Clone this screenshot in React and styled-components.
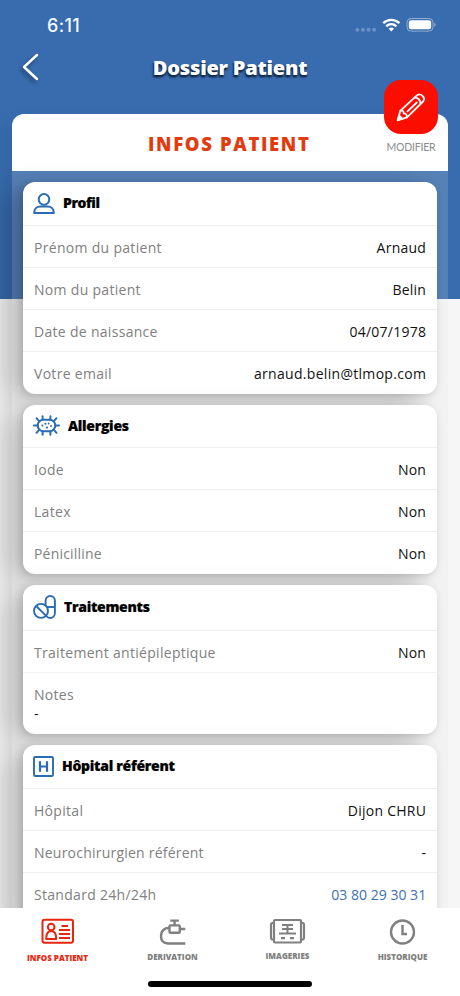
import React from 'react'
import styled, { createGlobalStyle } from 'styled-components'

const GlobalStyle = createGlobalStyle`
  * {
    box-sizing: border-box;
  }
  body {
    margin: 0;
    font-family: 'Open Sans', 'Noto Sans', sans-serif;
  }
`
const Screen = styled.div`
  display: flex;
  flex-direction: column;
  width: 460px;
  height: 996px;
  overflow: hidden;
  background: linear-gradient(#386cae 299px, #f6f6f6 299px);
`
const StatusBar = styled.div`
  display: flex;
  flex: none;
  height: 50px;
  padding: 0 24px 0 47px;
  justify-content: space-between;
  align-items: center;
`
const Time = styled.span`
  padding-top: 2px;
  font-family: 'Inter', sans-serif;
  font-size: 18px;
  font-weight: 500;
  line-height: 50px;
  color: #f4f8ff;
  letter-spacing: 0.3px;
`
const StatusIcons = styled.svg`
  display: block;
`
const NavBar = styled.header`
  display: grid;
  flex: none;
  grid-template-columns: 50px 1fr 50px;
  height: 64px;
`
const BackButton = styled.button`
  height: 36px;
  padding: 0 0 2px 21px;
  border: 0;
  background: none;
  svg {
    display: block;
    filter: drop-shadow(-2px 3px 2px rgba(0, 0, 0, 0.4));
  }
`
const Title = styled.h1`
  margin: 0;
  font-size: 20px;
  font-weight: 800;
  line-height: 36px;
  text-align: center;
  color: white;
  letter-spacing: -0.2px;
  text-shadow: 0 2px 2px #142a48, -1px 2px 2px rgba(10, 25, 50, 0.8);
`
const Panel = styled.main`
  position: relative;
  flex: 1;
  min-height: 0;
  margin: 0 12px;
`
const PanelBody = styled.div`
  height: 100%;
  border-radius: 12px 12px 0 0;
  background: rgba(225, 225, 225, 0.18);
  box-shadow: -14px 10px 20px rgba(0, 0, 0, 0.05);
`
const PanelHeader = styled.div`
  height: 57px;
  padding-left: 136px;
  border-radius: 12px 12px 0 0;
  background: white;
`
const PanelTitle = styled.h2`
  margin: 0;
  font-size: 18.5px;
  font-weight: 800;
  line-height: 60px;
  white-space: nowrap;
  color: #e23b0e;
  letter-spacing: 1.65px;
`
const Edit = styled.div`
  position: absolute;
  top: -34px;
  right: 10px;
  width: 54px;
`
const EditButton = styled.button`
  display: block;
  width: 54px;
  height: 54px;
  padding: 12px;
  border: 0;
  border-radius: 17px;
  background: #fb0d00;
`
const EditLabel = styled.div`
  display: flex;
  justify-content: center;
  font-family: 'Lato', sans-serif;
  font-size: 10.5px;
  line-height: 26px;
  color: #8b8b8b;
  white-space: nowrap;
  letter-spacing: -0.2px;
`
const Cards = styled.div`
  display: flex;
  flex-direction: column;
  gap: 11px;
  padding: 11px 11px 0;
`
const CardBox = styled.section`
  height: ${p => p.height}px;
  flex: none;
  border-radius: 12px;
  background: white;
  box-shadow: -18px 6px 26px rgba(0, 0, 0, 0.2), -2px 2px 8px rgba(0, 0, 0, 0.15);
`
const CardHeader = styled.div`
  display: flex;
  align-items: center;
  gap: 8px;
  height: ${p => p.height}px;
  padding-left: 10px;
  svg {
    display: block;
    flex: none;
  }
`
const CardTitle = styled.h3`
  margin: 0;
  font-size: 14px;
  font-weight: 800;
  line-height: 22px;
  color: #000;
  -webkit-text-stroke: 0.2px #000;
  letter-spacing: ${p => p.spacing};
`
const Row = styled.div`
  display: flex;
  justify-content: space-between;
  height: 42.2px;
  padding: 0 11px;
  border-top: 1px solid #eeeeee;
  line-height: 44px;
`
const Label = styled.span`
  font-size: 14px;
  color: #808080;
  white-space: nowrap;
  letter-spacing: ${p => p.spacing || '0.3px'};
`
const Value = styled.span`
  margin-right: -0.2px;
  font-size: 14px;
  color: ${p => (p.link ? '#3a70b4' : '#111')};
  white-space: nowrap;
  letter-spacing: ${p => p.spacing || '0.25px'};
`
const Notes = styled.div`
  height: 61px;
  padding: 12px 11px;
  border-top: 1px solid #f2f2f2;
  line-height: 19px;
  ${Label}, ${Value} {
    display: block;
  }
`
const TabBar = styled.nav`
  position: relative;
  flex: none;
  height: 88px;
  background: white;
`
const Tabs = styled.div`
  display: grid;
  grid-template-columns: repeat(4, 1fr);
  height: 73px;
`
const Tab = styled.div`
  display: flex;
  flex-direction: column;
  align-items: center;
  padding-top: 10px;
  color: ${p => (p.active ? '#e8250f' : '#808080')};
  svg {
    display: block;
  }
`
const TabLabel = styled.span`
  margin-top: ${p => p.top}px;
  font-size: 8px;
  font-weight: 800;
  line-height: 12px;
  white-space: nowrap;
`
const HomeIndicator = styled.div`
  width: 164px;
  height: 6px;
  margin: 0 auto;
  border-radius: 3px;
  background: black;
`

const BLUE = '#2a6cb2'

const ProfileIcon = () => (
  <svg width="22" height="22" viewBox="0 0 22 22" fill="none" stroke={BLUE} strokeWidth="2">
    <circle cx="11" cy="7.4" r="5.3" />
    <path d="M1.2 20.9c0-4 2.6-6.3 6.2-6.3h7.2c3.6 0 6.2 2.3 6.2 6.3z" strokeLinejoin="round" />
  </svg>
)

const GermIcon = () => (
  <svg width="27" height="21" viewBox="0 0 27 21" fill="none" stroke={BLUE} strokeWidth="2" strokeLinecap="round">
    <rect x="4.7" y="4.7" width="17.6" height="11.6" rx="5.8" />
    <path d="M9.6 4.5V1.2M17.4 4.5V1.2M9.6 16.5v3.3M17.4 16.5v3.3M4.5 10.5H1M22.5 10.5H26M6.3 6.3L3.5 3.2M20.7 6.3L23.5 3.2M6.3 14.7L3.5 17.8M20.7 14.7l2.8 3.1" />
    <g fill={BLUE} stroke="none">
      <circle cx="9.3" cy="10.5" r="1" />
      <circle cx="12.5" cy="8.7" r="1" />
      <circle cx="14" cy="12.5" r="1.1" />
      <circle cx="15.7" cy="8.5" r=".9" />
      <circle cx="18" cy="11" r="1" />
    </g>
  </svg>
)

const PillsIcon = () => (
  <svg width="23" height="24" viewBox="0 0 23 24" fill="none" stroke={BLUE} strokeWidth="1.9">
    <rect x="12.6" y="1" width="9.3" height="22" rx="4.65" />
    <path d="M12.6 12h9.3" />
    <circle cx="8" cy="15.9" r="7" fill="white" />
    <path d="M3.2 11l9.9 9.9" />
  </svg>
)

const HospitalIcon = () => (
  <svg width="21" height="21" viewBox="0 0 21 21" fill="none" stroke={BLUE}>
    <rect x="1" y="1" width="19" height="19" rx="1.3" strokeWidth="1.9" />
    <path d="M7 5.3v10.5M14 5.3v10.5M7 10.5h7" strokeWidth="2.2" />
  </svg>
)

const PencilIcon = () => (
  <svg width="30" height="30" viewBox="0 0 30 30" fill="none" stroke="white" strokeWidth="1.8" strokeLinejoin="round" strokeLinecap="round">
    <path d="M1.6 28.3L4.3 18.9 20.3 3.8c4.1-3.9 10.3 2 6.3 6.2L11 25.4z" />
    <path d="M4.3 18.9c2.6-.8 3.6.6 3.3 2.5 2-.3 3.4 1.2 3.4 4" />
    <path d="M18.3 5.7c3.6-.2 6.2 2.3 6.2 6M11.5 19.3l9.3-8.8" />
    <path d="M1.9 28l1.4-4.3 2.9 2.9z" fill="white" />
  </svg>
)

const IdIcon = () => (
  <svg width="34" height="27" viewBox="0 0 34 27" fill="none" stroke="currentColor" strokeWidth="2">
    <rect x="1.5" y="1.8" width="30.5" height="23" rx="2" />
    <circle cx="10.2" cy="9" r="3.3" />
    <path d="M5.2 20.9c0-5 1.5-7.9 5-7.9s5 2.9 5 7.9z" strokeLinejoin="round" />
    <path d="M20.5 8h6.5M18 12h11M18 16h11M18 20h11" />
  </svg>
)

const ValveIcon = () => (
  <svg width="27" height="27" viewBox="0 0 27 27" fill="none" stroke="currentColor" strokeWidth="2.4">
    <path d="M11.3 2.6h8.6M15.6 2.6v4.8" />
    <rect x="10.5" y="7.4" width="10.3" height="7.4" rx="1" />
    <path d="M20.8 11h5.5M10.5 9.8C4.2 10.2 2 13.4 2 18.1c0 4.8 2.5 7.4 7 7.4h17.3" />
  </svg>
)

const ScanIcon = () => (
  <svg width="38" height="27" viewBox="0 0 38 27" fill="none" stroke="currentColor" strokeWidth="2.2">
    <rect x="5" y="2" width="27" height="22.5" rx="1" />
    <path d="M5 5H3.5Q2 5 2 6.5v13Q2 21.5 3.5 21.5H5M32 5h1.500Q35 5 35 6.5v13q0 2-1.5 2H32" />
    <path d="M13 7h11M13 11h11M10 15.5h17M18.5 7v8.5" strokeWidth="2" />
    <path d="M12 20.2h4M21 20.2h4" />
  </svg>
)

const ClockIcon = () => (
  <svg width="27" height="27" viewBox="0 0 27 27" fill="none" stroke="currentColor" strokeWidth="2.4">
    <circle cx="13.5" cy="14" r="11.5" />
    <path d="M13.5 7v9h4.5" />
  </svg>
)

const cards = [
  {
    title: 'Profil', icon: ProfileIcon, titleSpacing: '-0.45px', headerHeight: 42.6, height: 211.5,
    rows: [
      { label: 'Prénom du patient', value: 'Arnaud' },
      { label: 'Nom du patient', value: 'Belin' },
      { label: 'Date de naissance', value: '04/07/1978' },
      { label: 'Votre email', value: 'arnaud.belin@tlmop.com', valueSpacing: '0.3px' },
    ],
  },
  {
    title: 'Allergies', icon: GermIcon, titleSpacing: '-0.3px', headerHeight: 42.6, height: 169,
    rows: [
      { label: 'Iode', value: 'Non' },
      { label: 'Latex', value: 'Non' },
      { label: 'Pénicilline', value: 'Non', labelSpacing: '0.2px' },
    ],
  },
  {
    title: 'Traitements', icon: PillsIcon, titleSpacing: '-0.3px', headerHeight: 45.5, height: 149,
    rows: [{ label: 'Traitement antiépileptique', value: 'Non' }],
    notes: '-',
  },
  {
    title: 'Hôpital référent', icon: HospitalIcon, titleSpacing: '-0.28px', headerHeight: 43.5, height: 212,
    rows: [
      { label: 'Hôpital', value: 'Dijon CHRU' },
      { label: 'Neurochirurgien référent', value: '-', labelSpacing: '0.22px' },
      { label: 'Standard 24h/24h', value: '03 80 29 30 31', valueSpacing: '0.02px', link: true },
    ],
  },
]

const Card = ({ title, titleSpacing, icon: Icon, headerHeight, height, rows, notes }) => (
  <CardBox height={height}>
    <CardHeader height={headerHeight}>
      <Icon />
      <CardTitle spacing={titleSpacing}>{title}</CardTitle>
    </CardHeader>
    {rows.map(row => (
      <Row key={row.label}>
        <Label spacing={row.labelSpacing}>{row.label}</Label>
        <Value spacing={row.valueSpacing} link={row.link}>
          {row.value}
        </Value>
      </Row>
    ))}
    {notes && (
      <Notes>
        <Label>Notes</Label>
        <Value>{notes}</Value>
      </Notes>
    )}
  </CardBox>
)

const tabs = [
  { label: 'INFOS PATIENT', icon: IdIcon, active: true, top: 7 },
  { label: 'DERIVATION', icon: ValveIcon, top: 6 },
  { label: 'IMAGERIES', icon: ScanIcon, top: 5 },
  { label: 'HISTORIQUE', icon: ClockIcon, top: 6 },
]

const App = () => (
  <>
    <GlobalStyle />
    <Screen>
      <StatusBar>
        <Time>6:11</Time>
        <StatusIcons width="82" height="16" viewBox="0 0 82 16" fill="white">
          <g opacity=".25">
            <circle cx="3.3" cy="12.8" r="2" />
            <circle cx="8.9" cy="12.8" r="2" />
            <circle cx="14.5" cy="12.8" r="2" />
            <circle cx="20.1" cy="12.8" r="2" />
          </g>
          <path
            d="M29.2 6.2c4.7-4.4 11.5-4.4 16.2 0M32.2 9.3c3-2.7 7.200-2.7 10.2 0"
            fill="none"
            stroke="white"
            strokeWidth="2.4"
          />
          <path d="M34.6 11.6c1.7-1.4 3.7-1.4 5.4 0L37.3 14.5z" />
          <rect x="53" y="1.5" width="26" height="12.6" rx="4" fill="none" stroke="white" strokeOpacity=".45" />
          <rect x="54.8" y="3.3" width="22.4" height="9" rx="2.4" />
          <path d="M80.3 5.8c1.7.7 1.7 3.5 0 4.2z" opacity=".5" />
        </StatusIcons>
      </StatusBar>
      <NavBar>
        <BackButton aria-label="Retour">
          <svg width="20" height="30" viewBox="0 0 20 30" fill="none" stroke="white" strokeWidth="2.4" strokeLinecap="round" strokeLinejoin="round">
            <path d="M16 3L3 15l13 12" />
          </svg>
        </BackButton>
        <Title>Dossier Patient</Title>
      </NavBar>
      <Panel>
        <PanelBody>
          <PanelHeader>
            <PanelTitle>INFOS PATIENT</PanelTitle>
          </PanelHeader>
          <Cards>
            {cards.map(card => (
              <Card key={card.title} {...card} />
            ))}
          </Cards>
        </PanelBody>
        <Edit>
          <EditButton aria-label="Modifier">
            <PencilIcon />
          </EditButton>
          <EditLabel>MODIFIER</EditLabel>
        </Edit>
      </Panel>
      <TabBar>
        <Tabs>
          {tabs.map(({ label, icon: Icon, active, top }) => (
            <Tab key={label} active={active}>
              <Icon />
              <TabLabel top={top}>{label}</TabLabel>
            </Tab>
          ))}
        </Tabs>
        <HomeIndicator />
      </TabBar>
    </Screen>
  </>
)

export default App
